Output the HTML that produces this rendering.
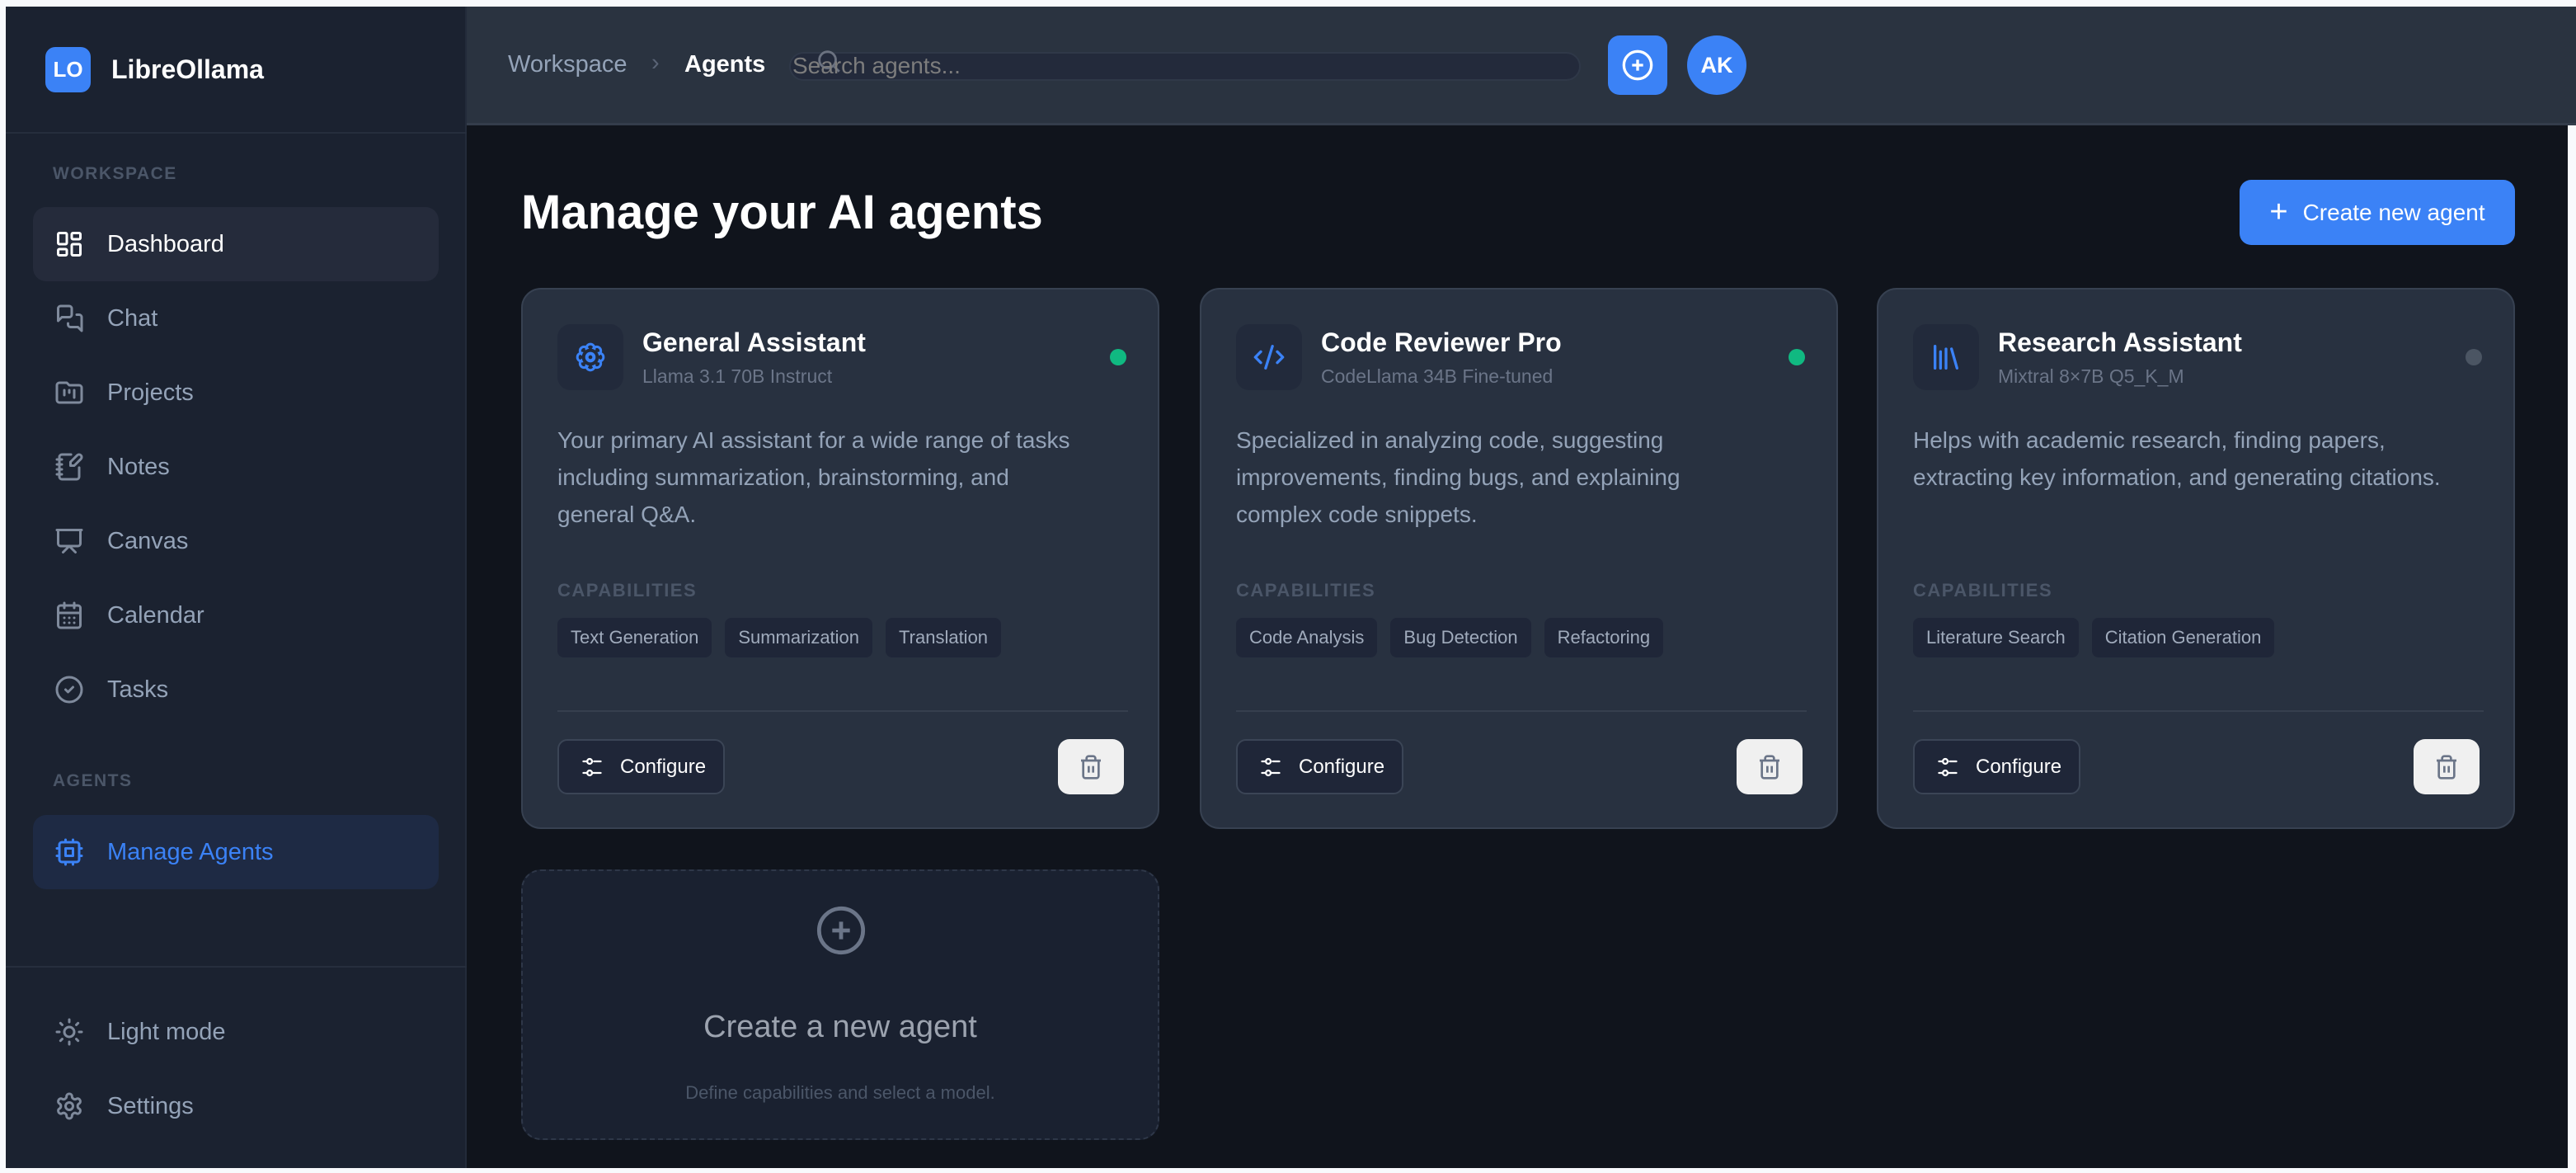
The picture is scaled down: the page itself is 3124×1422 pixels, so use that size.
<!DOCTYPE html>
<html><head><meta charset="utf-8"><style>
*{box-sizing:border-box;margin:0;padding:0}
body{width:3124px;height:1422px;background:#f8f9fc;font-family:"Liberation Sans",Arial,sans-serif;position:relative;overflow:hidden}
.abs{position:absolute}
#side{left:7px;top:8px;width:559px;height:1408px;background:#1b2230;border-right:2px solid #232b3a}
#head{left:566px;top:8px;width:2558px;height:144px;background:#2a3340;border-bottom:3px solid #343d4b}
#main{left:566px;top:152px;width:2548px;height:1264px;background:#10141c}
.lbl{color:#4b5668;font-size:21px;font-weight:bold;letter-spacing:1.5px}
.item{left:33px;width:492px;height:90px;border-radius:16px;display:flex;align-items:center;padding-left:26px;color:#94a3b8;font-size:29px}
.item svg{width:36px;height:36px;margin-right:28px;fill:none;stroke:#7f8a9c;stroke-width:2;stroke-linecap:round;stroke-linejoin:round}
.card{width:774px;height:656px;top:349px;background:#283140;border:2px solid #374151;border-radius:24px}
.ib{left:42px;top:42px;width:80px;height:80px;background:#222a3b;border-radius:16px;display:flex;align-items:center;justify-content:center}
.ib svg{width:40px;height:40px;fill:none;stroke:#3b82f6;stroke-width:2;stroke-linecap:round;stroke-linejoin:round}
.t{left:145px;top:46px;color:#fff;font-size:32px;font-weight:bold}
.st{left:145px;top:92px;color:#6b7588;font-size:23px}
.dot{left:712px;top:72px;width:20px;height:20px;border-radius:50%}
.d{left:42px;top:160px;width:720px;color:#94a3b8;font-size:28px;line-height:45px;white-space:nowrap}
.cap{left:42px;top:352px;color:#4b5668;font-size:22px;letter-spacing:1.5px;font-weight:bold}
.tags{left:42px;top:398px;display:flex;gap:16px}
.tags span{background:#1f2638;color:#a0abbc;font-size:22px;height:48px;line-height:48px;padding:0 16px;border-radius:8px}
.hr{left:42px;top:510px;width:692px;height:2px;background:#363f4e}
.cfg{left:42px;top:545px;width:203px;height:67px;border:2px solid #3b4556;background:#1f2638;border-radius:12px;color:#fff;font-size:24px;display:flex;align-items:center;padding-left:26px}
.cfg svg{width:28px;height:28px;margin-right:20px;fill:none;stroke:#fff;stroke-width:2;stroke-linecap:round}
.del{left:649px;top:545px;width:80px;height:67px;background:#f0f0f0;border-radius:14px;display:flex;align-items:center;justify-content:center}
</style></head><body>
<div id="side" class="abs">
  <div class="abs" style="left:48px;top:49px;width:55px;height:55px;background:#3b82f6;border-radius:12px;color:#fff;font-weight:bold;font-size:26px;display:flex;align-items:center;justify-content:center">LO</div>
  <div class="abs" style="left:128px;top:58px;color:#fff;font-size:32px;font-weight:bold">LibreOllama</div>
  <div class="abs" style="left:0;top:152px;width:559px;height:2px;background:#262e3d"></div>
  <div class="abs lbl" style="left:57px;top:191px">WORKSPACE</div>
  <div class="abs item" style="top:243px;background:#252b3b;color:#fff"><svg viewBox="0 0 24 24" style="stroke:#fff"><rect x="3" y="3" width="7" height="9" rx="1"/><rect x="14" y="3" width="7" height="5" rx="1"/><rect x="14" y="12" width="7" height="9" rx="1"/><rect x="3" y="16" width="7" height="5" rx="1"/></svg>Dashboard</div>
  <div class="abs item" style="top:333px"><svg viewBox="0 0 24 24"><path d="M14 9a2 2 0 0 1-2 2H6l-3 3V4a2 2 0 0 1 2-2h7a2 2 0 0 1 2 2z"/><path d="M18 9h2a2 2 0 0 1 2 2v11l-3-3h-6a2 2 0 0 1-2-2v-1"/></svg>Chat</div>
  <div class="abs item" style="top:423px"><svg viewBox="0 0 24 24"><path d="M4 20h16a2 2 0 0 0 2-2V8a2 2 0 0 0-2-2h-8L10 4H4a2 2 0 0 0-2 2v12a2 2 0 0 0 2 2z"/><path d="M8 10v4M12 10v2M16 10v6"/></svg>Projects</div>
  <div class="abs item" style="top:513px"><svg viewBox="0 0 24 24"><path d="M13.4 2H6a2 2 0 0 0-2 2v16a2 2 0 0 0 2 2h12a2 2 0 0 0 2-2v-7.4"/><path d="M2 6h4M2 10h4M2 14h4M2 18h4"/><path d="M21.4 5.6a2 2 0 0 0-3-3L13 8v3h3z"/></svg>Notes</div>
  <div class="abs item" style="top:603px"><svg viewBox="0 0 24 24"><path d="M2 3h20M21 3v11a2 2 0 0 1-2 2H5a2 2 0 0 1-2-2V3M7 21l5-5 5 5"/></svg>Canvas</div>
  <div class="abs item" style="top:693px"><svg viewBox="0 0 24 24"><rect x="3" y="4" width="18" height="18" rx="2"/><path d="M8 2v4M16 2v4M3 10h18M8 14h.01M12 14h.01M16 14h.01M8 18h.01M12 18h.01M16 18h.01"/></svg>Calendar</div>
  <div class="abs item" style="top:783px"><svg viewBox="0 0 24 24"><circle cx="12" cy="12" r="10"/><path d="m9 12 2 2 4-4"/></svg>Tasks</div>
  <div class="abs lbl" style="left:57px;top:927px">AGENTS</div>
  <div class="abs item" style="top:980px;height:90px;background:#1e2a44;color:#3b82f6"><svg viewBox="0 0 24 24" style="stroke:#3b82f6"><rect x="4" y="4" width="16" height="16" rx="2"/><rect x="9" y="9" width="6" height="6"/><path d="M15 2v2M15 20v2M2 15h2M2 9h2M20 15h2M20 9h2M9 2v2M9 20v2"/></svg>Manage Agents</div>
  <div class="abs" style="left:0;top:1163px;width:559px;height:2px;background:#262e3d"></div>
  <div class="abs item" style="top:1198px"><svg viewBox="0 0 24 24"><circle cx="12" cy="12" r="4"/><path d="M12 2v2M12 20v2M4.9 4.9l1.4 1.4M17.7 17.7l1.4 1.4M2 12h2M20 12h2M6.3 17.7l-1.4 1.4M19.1 4.9l-1.4 1.4"/></svg>Light mode</div>
  <div class="abs item" style="top:1288px"><svg viewBox="0 0 24 24"><path d="M12.2 2h-.4a2 2 0 0 0-2 2v.2a2 2 0 0 1-1 1.7l-.4.3a2 2 0 0 1-2 0l-.2-.1a2 2 0 0 0-2.7.7l-.2.4a2 2 0 0 0 .7 2.7l.2.1a2 2 0 0 1 1 1.7v.5a2 2 0 0 1-1 1.7l-.2.1a2 2 0 0 0-.7 2.7l.2.4a2 2 0 0 0 2.7.7l.2-.1a2 2 0 0 1 2 0l.4.3a2 2 0 0 1 1 1.7v.2a2 2 0 0 0 2 2h.4a2 2 0 0 0 2-2v-.2a2 2 0 0 1 1-1.7l.4-.3a2 2 0 0 1 2 0l.2.1a2 2 0 0 0 2.7-.7l.2-.4a2 2 0 0 0-.7-2.7l-.2-.1a2 2 0 0 1-1-1.7v-.5a2 2 0 0 1 1-1.7l.2-.1a2 2 0 0 0 .7-2.7l-.2-.4a2 2 0 0 0-2.7-.7l-.2.1a2 2 0 0 1-2 0l-.4-.3a2 2 0 0 1-1-1.7V4a2 2 0 0 0-2-2z"/><circle cx="12" cy="12" r="3"/></svg>Settings</div>
</div>
<div id="head" class="abs">
  <div class="abs" style="left:50px;top:54px;color:#94a3b8;font-size:29px">Workspace</div>
  <div class="abs" style="left:224px;top:52px;color:#5a6476;font-size:29px">›</div>
  <div class="abs" style="left:264px;top:54px;color:#fff;font-size:29px;font-weight:bold">Agents</div>
  <div class="abs" style="left:391px;top:55px;width:960px;height:35px;background:#232a3b;border:2px solid #2f3848;border-radius:18px"></div>
  <svg class="abs" style="left:422px;top:46px" width="34" height="40" viewBox="0 0 24 24" fill="none" stroke="#6b7280" stroke-width="2"><circle cx="11" cy="11" r="7"/><path d="m21 21-4.3-4.3"/></svg>
  <div class="abs" style="left:395px;top:56px;color:#7d7d7d;font-size:28px">Search agents...</div>
  <div class="abs" style="left:1384px;top:35px;width:72px;height:72px;background:#3b82f6;border-radius:14px;display:flex;align-items:center;justify-content:center"><svg width="40" height="40" viewBox="0 0 24 24" fill="none" stroke="#fff" stroke-width="2"><circle cx="12" cy="12" r="10"/><path d="M12 8v8M8 12h8"/></svg></div>
  <div class="abs" style="left:1480px;top:35px;width:72px;height:72px;background:#3b82f6;border-radius:50%;color:#fff;font-weight:bold;font-size:27px;display:flex;align-items:center;justify-content:center">AK</div>
</div>
<div id="main" class="abs">
  <div class="abs" style="left:66px;top:72px;color:#fff;font-size:58px;font-weight:bold">Manage your AI agents</div>
  <div class="abs" style="left:2150px;top:66px;width:334px;height:79px;background:#3b82f6;border-radius:14px;color:#fff;font-size:28px;display:flex;align-items:center;justify-content:center"><span style="font-size:38px;margin-right:18px;font-weight:300">+</span>Create new agent</div>
</div>

<div class="abs card" style="left:632px">
  <div class="abs ib"><svg viewBox="0 0 24 24"><g stroke-width="1.8"><circle cx="12" cy="5.5" r="3"/><circle cx="16.6" cy="7.4" r="3"/><circle cx="18.5" cy="12" r="3"/><circle cx="16.6" cy="16.6" r="3"/><circle cx="12" cy="18.5" r="3"/><circle cx="7.4" cy="16.6" r="3"/><circle cx="5.5" cy="12" r="3"/><circle cx="7.4" cy="7.4" r="3"/></g><circle cx="12" cy="12" r="6.2" fill="#222a3b" stroke="none"/><circle cx="12" cy="12" r="2.6" stroke-width="2.4"/></svg></div>
  <div class="abs t">General Assistant</div><div class="abs st">Llama 3.1 70B Instruct</div>
  <div class="abs dot" style="background:#10b981"></div>
  <div class="abs d">Your primary AI assistant for a wide range of tasks<br>including summarization, brainstorming, and<br>general Q&amp;A.</div>
  <div class="abs cap">CAPABILITIES</div>
  <div class="abs tags"><span>Text Generation</span><span>Summarization</span><span>Translation</span></div>
  <div class="abs hr"></div>
  <div class="abs cfg"><svg viewBox="0 0 24 24"><path d="M14 6h7M3 6h4M12 18h9M3 18h4"/><circle cx="9.5" cy="6" r="2.5"/><circle cx="9.5" cy="18" r="2.5"/></svg>Configure</div>
  <div class="abs del"><svg width="32" height="32" viewBox="0 0 24 24" fill="none" stroke="#6b7588" stroke-width="2"><path d="M3 6h18M19 6v14a2 2 0 0 1-2 2H7a2 2 0 0 1-2-2V6M8 6V4a2 2 0 0 1 2-2h4a2 2 0 0 1 2 2v2M10 11v6M14 11v6"/></svg></div>
</div>
<div class="abs card" style="left:1455px">
  <div class="abs ib"><svg viewBox="0 0 24 24"><path d="m18 16 4-4-4-4M6 8l-4 4 4 4M14.5 4l-5 16"/></svg></div>
  <div class="abs t">Code Reviewer Pro</div><div class="abs st">CodeLlama 34B Fine-tuned</div>
  <div class="abs dot" style="background:#10b981"></div>
  <div class="abs d">Specialized in analyzing code, suggesting<br>improvements, finding bugs, and explaining<br>complex code snippets.</div>
  <div class="abs cap">CAPABILITIES</div>
  <div class="abs tags"><span>Code Analysis</span><span>Bug Detection</span><span>Refactoring</span></div>
  <div class="abs hr"></div>
  <div class="abs cfg"><svg viewBox="0 0 24 24"><path d="M14 6h7M3 6h4M12 18h9M3 18h4"/><circle cx="9.5" cy="6" r="2.5"/><circle cx="9.5" cy="18" r="2.5"/></svg>Configure</div>
  <div class="abs del"><svg width="32" height="32" viewBox="0 0 24 24" fill="none" stroke="#6b7588" stroke-width="2"><path d="M3 6h18M19 6v14a2 2 0 0 1-2 2H7a2 2 0 0 1-2-2V6M8 6V4a2 2 0 0 1 2-2h4a2 2 0 0 1 2 2v2M10 11v6M14 11v6"/></svg></div>
</div>
<div class="abs card" style="left:2276px">
  <div class="abs ib"><svg viewBox="0 0 24 24"><path d="m16 6 4 14M12 6v14M8 8v12M4 4v16"/></svg></div>
  <div class="abs t">Research Assistant</div><div class="abs st">Mixtral 8×7B Q5_K_M</div>
  <div class="abs dot" style="background:#4b5563"></div>
  <div class="abs d">Helps with academic research, finding papers,<br>extracting key information, and generating citations.</div>
  <div class="abs cap">CAPABILITIES</div>
  <div class="abs tags"><span>Literature Search</span><span>Citation Generation</span></div>
  <div class="abs hr"></div>
  <div class="abs cfg"><svg viewBox="0 0 24 24"><path d="M14 6h7M3 6h4M12 18h9M3 18h4"/><circle cx="9.5" cy="6" r="2.5"/><circle cx="9.5" cy="18" r="2.5"/></svg>Configure</div>
  <div class="abs del"><svg width="32" height="32" viewBox="0 0 24 24" fill="none" stroke="#6b7588" stroke-width="2"><path d="M3 6h18M19 6v14a2 2 0 0 1-2 2H7a2 2 0 0 1-2-2V6M8 6V4a2 2 0 0 1 2-2h4a2 2 0 0 1 2 2v2M10 11v6M14 11v6"/></svg></div>
</div>

<div class="abs" style="left:632px;top:1054px;width:774px;height:328px;background:#1a2130;border:2px dashed #2e3748;border-radius:24px">
  <svg class="abs" style="left:354px;top:40px" width="64" height="64" viewBox="0 0 24 24" fill="none" stroke="#6b7588" stroke-width="1.8"><circle cx="12" cy="12" r="10"/><path d="M12 8v8M8 12h8"/></svg>
  <div class="abs" style="left:0;width:770px;top:168px;text-align:center;color:#9ca3af;font-size:38px">Create a new agent</div>
  <div class="abs" style="left:0;width:770px;top:256px;text-align:center;color:#4b5668;font-size:22px">Define capabilities and select a model.</div>
</div>
</body></html>
